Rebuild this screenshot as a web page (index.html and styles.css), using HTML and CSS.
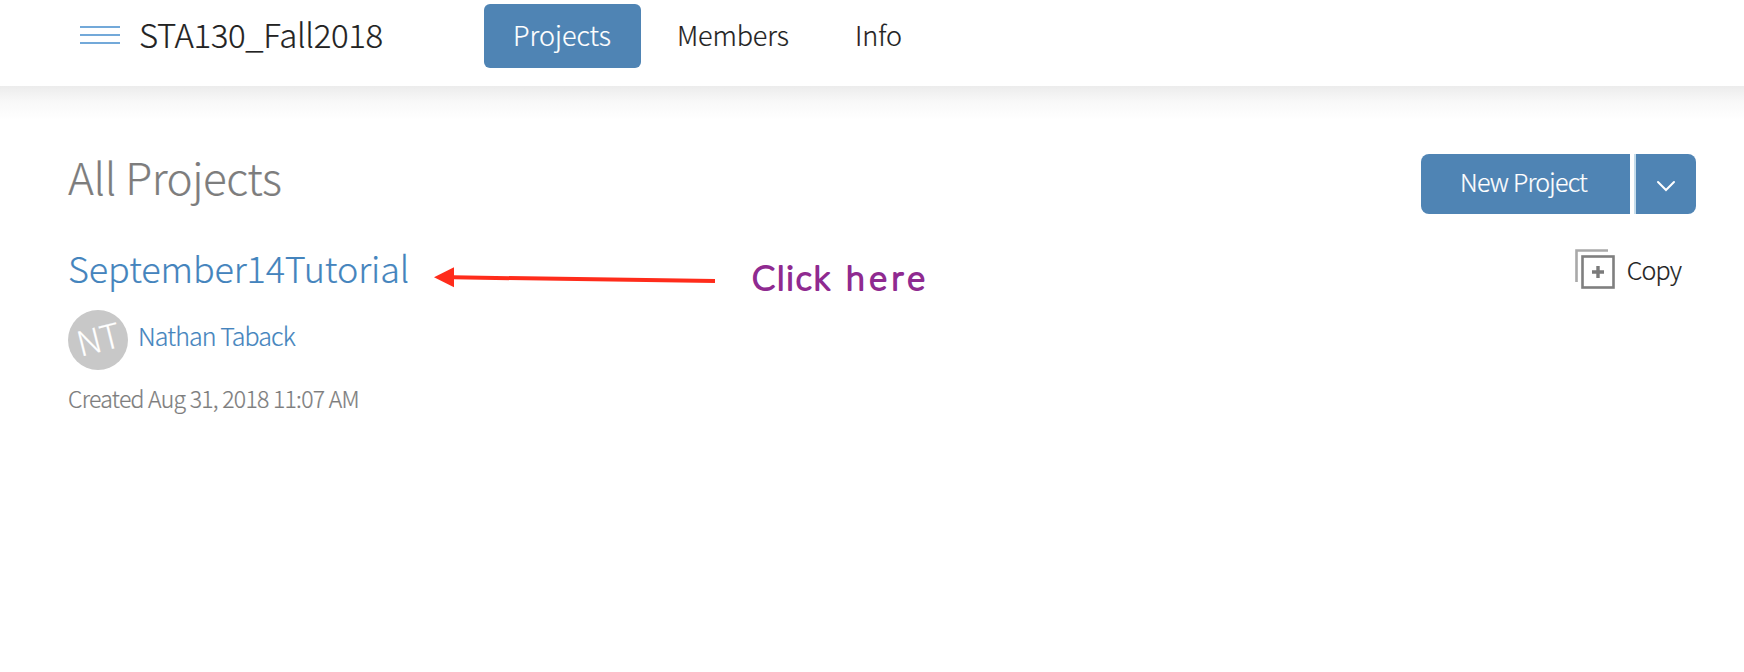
FILE: index.html
```html
<!DOCTYPE html>
<html lang="en">
<head>
<meta charset="utf-8">
<title>STA130_Fall2018</title>
<link rel="stylesheet" href="styles.css">
</head>
<body>
<header class="topbar">
  <svg class="menu" width="40" height="18" viewBox="0 0 40 18"><path d="M0 1h40M0 9h40M0 17h40" stroke="#73a9d9" stroke-width="2"/></svg>
  <span class="space-name">STA130_Fall2018</span>
  <nav class="tabs">
    <a class="tab tab-active"><span>Projects</span></a>
    <a class="tab tab-members"><span>Members</span></a>
    <a class="tab tab-info"><span>Info</span></a>
  </nav>
</header>
<main class="content">
  <div class="heading-row">
    <h1 class="heading"><span>All Projects</span></h1>
    <div class="split-button">
      <button class="new-project"><span>New Project</span></button>
      <button class="more" aria-label="More"><svg width="20" height="12" viewBox="0 0 20 12"><path d="M2 2l8 8 8-8" fill="none" stroke="#fff" stroke-width="2" stroke-linecap="round"/></svg></button>
    </div>
  </div>
  <article class="project">
    <div class="details">
      <a class="project-name"><span>September14Tutorial</span></a>
      <div class="owner">
        <div class="avatar"><span>NT</span></div>
        <a class="owner-name">Nathan Taback</a>
      </div>
      <div class="created"><span>Created Aug 31, 2018 11:07 AM</span></div>
    </div>
    <a class="copy">
      <svg width="40" height="40" viewBox="0 0 40 40" fill="none"><path d="M1.5 33V1.5H33" stroke="#a9a9a9" stroke-width="2.6"/><rect x="7.5" y="7.5" width="31" height="31" stroke="#7f7f7f" stroke-width="2.6"/><path d="M17 23h12M23 17v12" stroke="#7b7b7b" stroke-width="3.4"/></svg>
      <span>Copy</span>
    </a>
  </article>
</main>
<svg class="annotation" width="500" height="60" viewBox="0 0 500 60">
  <path d="M19 27.3L281 31.1" stroke="#ff2c1b" stroke-width="4"/>
  <path d="M0 27.3L20 17.3V37.3Z" fill="#ff2c1b"/>
  <g class="note"><text x="318" y="40" textLength="78">Click</text><text x="412" y="40" textLength="79">here</text></g>
</svg>
</body>
</html>
```
FILE: styles.css
```css
* { box-sizing: border-box; }
body {
  margin: 0;
  height: 672px;
  overflow: hidden;
  background: #fff;
  color: #222;
  font-family: "Noto Sans CJK SC", "Noto Sans", sans-serif;
  font-weight: 300;
  -webkit-text-stroke: 0.2px;
}
button { border: 0; padding: 0; font: inherit; color: inherit; letter-spacing: inherit; }
.topbar {
  position: relative;
  height: 86px;
  padding: 4px 0 0 80px;
  display: flex;
  align-items: flex-start;
}
.topbar::after {
  content: "";
  position: absolute;
  left: 0;
  right: 0;
  top: 86px;
  height: 34px;
  background: linear-gradient(#ececec, #f8f8f8 45%, #fff);
}
.menu { flex: none; margin-top: 22px; }
.space-name {
  flex: none;
  width: 364px;
  padding-left: 19px;
  font-size: 33px;
  line-height: 60px;
  letter-spacing: -0.38px;
}
.tabs { display: flex; line-height: 62px; font-size: 27px; }
.tab { height: 64px; padding: 0 30px; }
.tab-active {
  width: 157px;
  padding-left: 29px;
  border-radius: 6px;
  background: #4f84b4;
  color: #fff;
}
.tab-members { width: 178px; padding-left: 36px; letter-spacing: -0.15px; }
.tab-info { padding-left: 36px; }
.content { padding: 68px 48px 0 68px; }
.heading-row { display: flex; justify-content: space-between; height: 86px; }
.heading {
  margin: 0;
  font-size: 44px;
  line-height: 45px;
  font-weight: 300;
  letter-spacing: -0.45px;
  color: #7d7d7d;
}
.split-button { display: flex; gap: 4px; height: 60px; color: #fff; font-size: 25px; line-height: 54px; letter-spacing: -0.8px; }
.new-project { width: 209px; padding: 0 0 6px 39px; text-align: left; border-radius: 8px 0 0 8px; background: #4f84b4; }
.more {
  width: 62px;
  padding: 4px 0 0;
  display: flex;
  align-items: center;
  justify-content: center;
  border-left: 2px solid #c5dceb;
  border-radius: 0 8px 8px 0;
  background: #4f84b4;
}
.project { display: flex; justify-content: space-between; }
.project-name { display: block; height: 70px; font-size: 36px; line-height: 55px; letter-spacing: -0.12px; color: #4484bd; }
.owner { display: flex; gap: 10px; height: 60px; }
.avatar {
  width: 60px;
  height: 60px;
  border-radius: 50%;
  background: #c8c8c8;
  color: #fff;
  font-size: 34px;
  line-height: 56px;
  text-align: center;
  letter-spacing: -0.5px;
}
.avatar span { display: block; transform: rotate(-14deg); }
.owner-name { font-size: 25px; line-height: 50px; letter-spacing: -0.9px; color: #4484bd; }
.created { font-size: 23px; line-height: 56px; letter-spacing: -0.72px; color: #7d7d7d; }
.copy { display: flex; gap: 12px; height: 40px; margin: 9px 15px 0 0; font-size: 25px; line-height: 41px; letter-spacing: -0.9px; }
.annotation { position: absolute; left: 434px; top: 250px; }
.note text {
  font: 300 34px Lato, sans-serif;
  fill: #8f2a90;
  stroke: #8f2a90;
  stroke-width: 2px;
  stroke-linejoin: round;
}
```
